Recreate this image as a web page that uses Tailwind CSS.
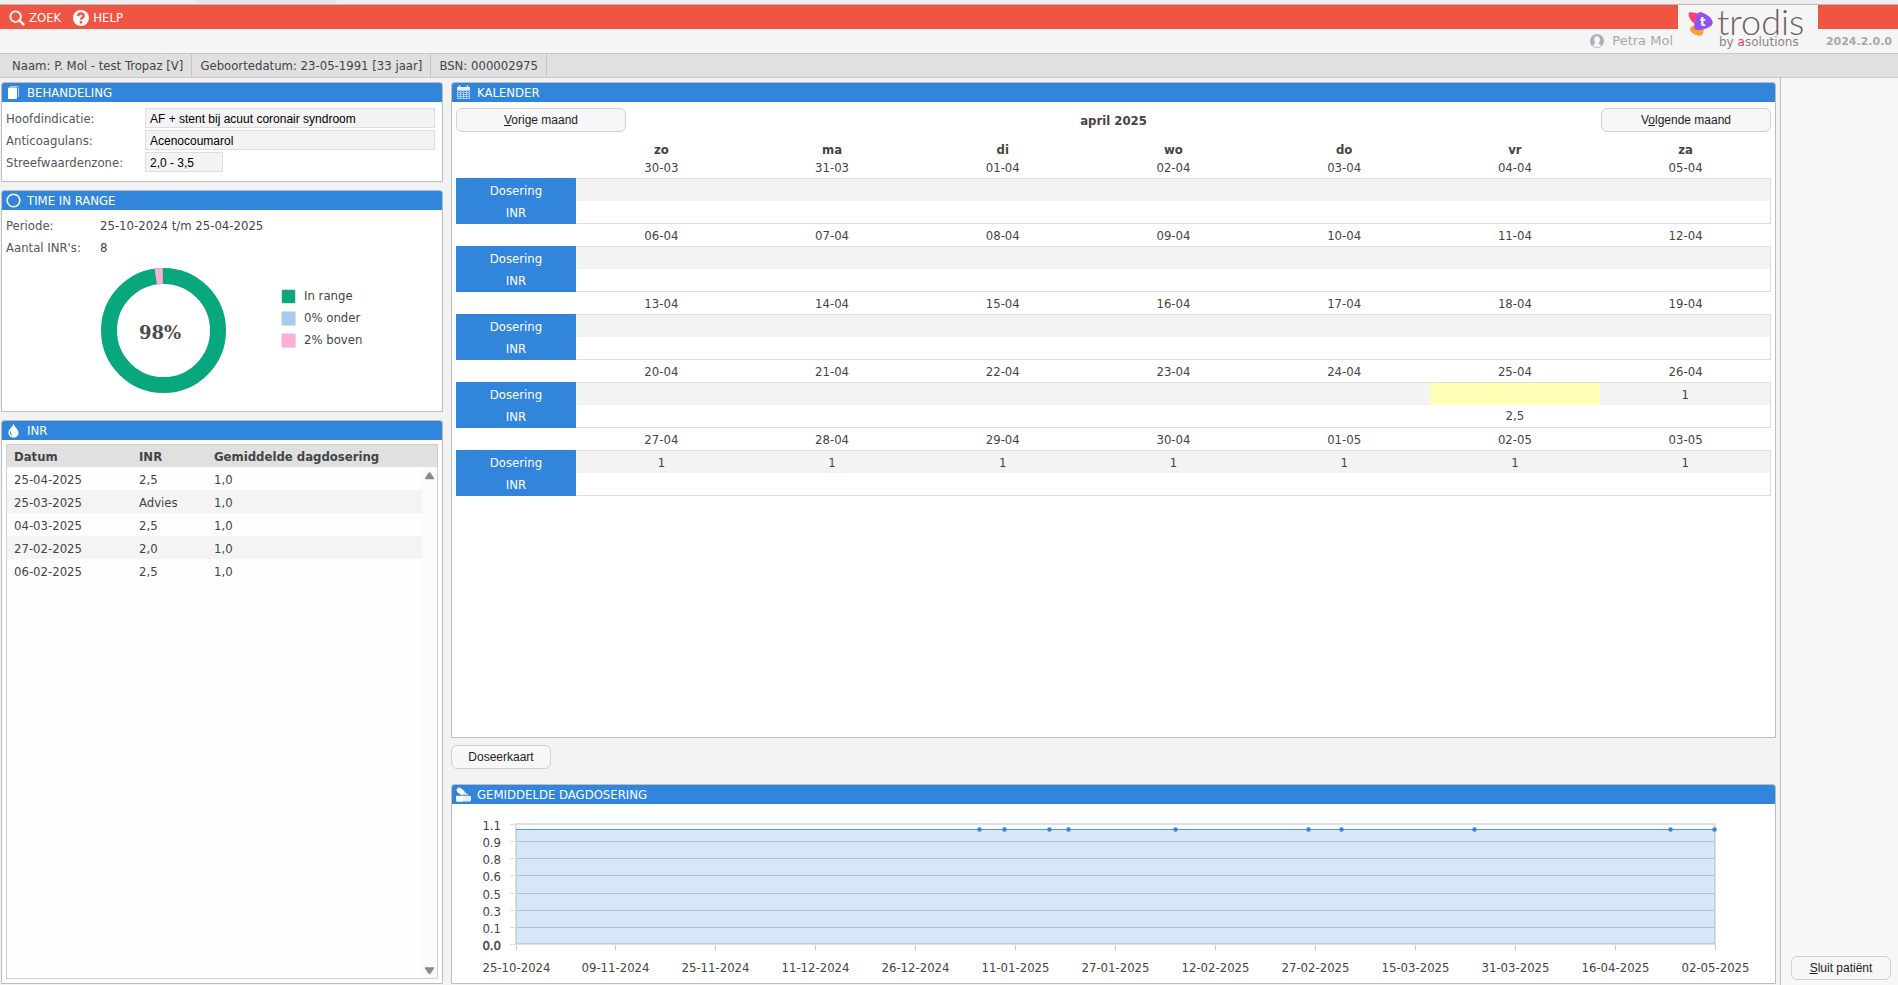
<!DOCTYPE html>
<html lang="nl">

<head>
  <meta charset="UTF-8" />
  <meta name="viewport" content="width=device-width, initial-scale=1.0" />
  <title>Trodis</title>
  <script src="https://cdn.jsdelivr.net/npm/@tailwindcss/browser@4"></script>
</head>

<body class="h-screen flex flex-col overflow-hidden bg-[#f3f3f3] text-[#444444] text-[13px] leading-[16px] font-['DejaVu_Sans_Condensed','DejaVu_Sans',sans-serif]">

  <!-- Window edge -->
  <div class="h-[5px] shrink-0 bg-[#eeeeee] border-b border-[#bbbbbb]">
    <div class="ml-[196px] w-[141px] h-1 bg-[#e6e6e6] rounded-b"></div>
  </div>

  <!-- Header -->
  <header class="flex shrink-0 h-12 bg-[#f5f5f5]">
    <div class="flex-1 flex flex-col">
      <nav class="h-6 bg-[#f05543] text-white flex items-center pl-[9px] pt-px gap-3">
        <a href="#" class="flex items-center gap-1">
          <svg class="w-4 h-4" viewBox="0 0 17 17" fill="none" stroke="white" stroke-linecap="round">
            <circle cx="7" cy="7" r="5.6" stroke-width="2" />
            <path d="M11.3 11.3l4 4" stroke-width="2.6" />
          </svg>
          ZOEK
        </a>
        <a href="#" class="flex items-center gap-1">
          <svg class="w-4 h-4" viewBox="0 0 16 16">
            <circle cx="8" cy="8" r="8" fill="white" />
            <path d="M5.200 6.300c0-3.800 5.500-3.600 5.500-.5 0 2-2.600 1.900-2.600 3.900" fill="none" stroke="#f05543" stroke-width="2.400" />
            <circle cx="8" cy="12.300" r="1.400" fill="#f05543" />
          </svg>
          HELP
        </a>
      </nav>
      <div class="flex-1 flex items-center justify-end gap-2 pr-[5px] pb-1 pt-1 pl-2 text-[#a8a8a8] font-['DejaVu_Sans',sans-serif]">
        <svg class="w-[14px] h-[14px]" viewBox="0 0 14 14">
          <circle cx="7" cy="7" r="7" fill="#a9b0bb" />
          <path d="M7 2.200C3.500 2.200 3.600 6.500 5 8.500c.3 1.200-.6 1.800-2.600 2.600 1.500 3 7.700 3 9.200 0C9.600 10.300 8.700 9.700 9 8.500c1.400-2 1.500-6.300-2-6.300z" fill="#f5f5f5" />
        </svg>
        Petra Mol
      </div>
    </div>
    <!-- Logo -->
    <div class="w-[140px] pl-[10px] pt-1 flex gap-1">
      <svg class="w-[25px] h-[25px] mt-0.5" viewBox="0 0 25 25">
        <path d="M.6 3.600C.2 1.800 1.300 1 3 1.200L14 3l-6 11C4 11.500 1.200 8 .6 3.600z" fill="#ff3f77" />
        <path d="M1.800 18.500c-.6-2 4.500-5.500 8-5.500l6 5c-.3 3.500-1.200 6.500-3 6.800C8.500 25 3 22.500 1.800 18.500z" fill="#ff9f38" />
        <path d="M11.500 1C13 .2 22 4.500 24 9c1.200 2.600 1 4.600-1.500 6.200C19 17.600 12 19.500 8.500 19c-2.800-.4-2.400-3-1.600-6.500C7.900 8.500 9.500 2.200 11.500 1z" fill="#9150f5" />
        <text x="12" y="15" font-family="DejaVu Sans" font-weight="bold" font-size="12" fill="white">t</text>
      </svg>
      <div class="flex flex-col gap-1 text-[#6b6165]">
        <span class="text-[36px] leading-[24px] font-light font-['Lato',sans-serif]">trodis</span>
        <span class="pl-0.5 text-[12px] leading-[10px] text-[#8b8487] font-['DejaVu_Sans',sans-serif]">by <span class="text-[#e83a4c]">a</span>solutions</span>
      </div>
    </div>
    <div class="w-20 flex flex-col">
      <div class="h-6 bg-[#f05543]"></div>
      <div class="flex-1 flex items-center justify-end pt-px pr-1.5 text-[11px] font-bold text-[#a8a8a8] font-['DejaVu_Sans',sans-serif]">2024.2.0.0</div>
    </div>
  </header>

  <!-- Patient bar -->
  <div class="shrink-0 h-[25px] bg-[#e0e0e0] border-y border-[#c8c8c8] flex pl-1">
    <div class="px-2 pt-1 border-r border-[#c4c4cc]">Naam: P. Mol - test Tropaz [V]</div>
    <div class="px-2 pt-1 border-r border-[#c4c4cc]">Geboortedatum: 23-05-1991 [33 jaar]</div>
    <div class="px-2 pt-1 border-r border-[#c4c4cc]">BSN: 000002975</div>
  </div>

  <main class="flex-1 min-h-0 flex">
    <!-- Left column -->
    <div class="w-[443px] shrink-0 flex flex-col gap-2 pl-px pt-1 pb-px">
      <section class="h-[100px] shrink-0 bg-white border border-[#bdbdbd] rounded-t-[3px]">
        <h2 class="h-[19px] bg-[#3186dc] text-white rounded-t-[2px] flex items-center gap-1.5 pl-1">
          <svg class="w-[15px] h-[15px]" viewBox="0 0 15 15">
            <path d="M4 1.500h7.500a1 1 0 0 1 1 1V12" fill="none" stroke="#a9cdf2" />
            <rect x="2" y="2.500" width="9" height="11.500" rx="1" fill="white" />
          </svg>
          BEHANDELING
        </h2>
        <div class="pl-1 pr-[7px] pt-[6px] grid grid-cols-[139px_1fr] gap-y-0.5 items-center">
          <label for="indicatie" class="pt-0.5 text-[#555555]">Hoofdindicatie:</label>
          <input id="indicatie" readonly value="AF + stent bij acuut coronair syndroom" class="h-5 w-full px-1 pt-0.5 bg-[#f3f3f3] border border-[#dddddd] text-black text-[12px] font-['Liberation_Sans',sans-serif]" />
          <label for="anticoagulans" class="pt-0.5 text-[#555555]">Anticoagulans:</label>
          <input id="anticoagulans" readonly value="Acenocoumarol" class="h-5 w-full px-1 pt-0.5 bg-[#f3f3f3] border border-[#dddddd] text-black text-[12px] font-['Liberation_Sans',sans-serif]" />
          <label for="streefwaarde" class="pt-0.5 text-[#555555]">Streefwaardenzone:</label>
          <input id="streefwaarde" readonly value="2,0 - 3,5" class="h-5 w-[78px] px-1 pt-0.5 bg-[#f3f3f3] border border-[#dddddd] text-black text-[12px] font-['Liberation_Sans',sans-serif]" />
        </div>
      </section>

      <section class="h-[222px] shrink-0 bg-white border border-[#bdbdbd] rounded-t-[3px]">
        <h2 class="h-[19px] bg-[#3186dc] text-white rounded-t-[2px] flex items-center gap-1.5 pl-1">
          <svg class="w-[15px] h-[15px]" viewBox="0 0 15 15">
            <circle cx="7.500" cy="7.500" r="6.300" fill="none" stroke="white" stroke-width="1.600" />
          </svg>
          TIME IN RANGE
        </h2>
        <dl class="pl-1 pt-[5px] grid grid-cols-[94px_1fr] leading-[22px]">
          <dt class="text-[#555555]">Periode:</dt>
          <dd>25-10-2024 t/m 25-04-2025</dd>
          <dt class="text-[#555555]">Aantal INR's:</dt>
          <dd>8</dd>
        </dl>
        <div class="flex pl-[99px] pt-[9px] gap-[55px]">
          <svg class="w-[125px] h-[125px]" viewBox="0 0 125 125">
            <circle cx="62.500" cy="62.500" r="54.500" fill="none" stroke="#08a77e" stroke-width="16" />
            <circle cx="62.500" cy="62.500" r="54.500" fill="none" stroke="#ffaed4" stroke-width="16" pathLength="100" stroke-dasharray="2.100 97.900" transform="rotate(-98.200 62.500 62.500)" />
            <text x="59" y="71" text-anchor="middle" font-family="DejaVu Serif" font-weight="bold" font-size="18" fill="#4c4c4c">98%</text>
          </svg>
          <ul class="pt-[17px] leading-[22px]">
            <li class="flex items-center gap-2"><span class="w-[15px] h-[15px] bg-[#08a77e] border border-[#dddddd] rounded-[2px]"></span>In range</li>
            <li class="flex items-center gap-2"><span class="w-[15px] h-[15px] bg-[#a8cbf0] border border-[#dddddd] rounded-[2px]"></span>0% onder</li>
            <li class="flex items-center gap-2"><span class="w-[15px] h-[15px] bg-[#ffaed4] border border-[#dddddd] rounded-[2px]"></span>2% boven</li>
          </ul>
        </div>
      </section>

      <section class="flex-1 min-h-0 flex flex-col bg-white border border-[#bdbdbd] rounded-t-[3px]">
        <h2 class="h-[19px] shrink-0 bg-[#3186dc] text-white rounded-t-[2px] flex items-center gap-1.5 pl-1">
          <svg class="w-[15px] h-[15px]" viewBox="0 0 15 15">
            <path d="M7.500.6C8.200 4 12.600 6.500 12.600 9.800a5.100 4.900 0 0 1-10.200 0C2.400 6.500 6.800 4 7.500.6z" fill="white" />
            <path d="M4.600 8.500c-.5 2 .3 3.300 1.700 4" fill="none" stroke="#3186dc" />
          </svg>
          INR
        </h2>
        <div class="flex-1 m-1 border border-[#cfcfcf] bg-[#fefefe] flex flex-col">
          <div class="flex-1 flex bg-[linear-gradient(#e0e0e0_22px,transparent_22px)]">
            <div class="flex-1">
              <table class="w-full table-fixed">
                <colgroup>
                  <col class="w-[125px]" />
                  <col class="w-[75px]" />
                  <col />
                </colgroup>
                <thead>
                  <tr class="h-[22px] text-left">
                    <th class="pl-[7px] pt-0.5">Datum</th>
                    <th class="pl-[7px] pt-0.5">INR</th>
                    <th class="pl-[7px] pt-0.5">Gemiddelde dagdosering</th>
                  </tr>
                </thead>
                <tbody>
                  <tr class="h-[23px]"><td class="pl-[7px] pt-0.5">25-04-2025</td><td class="pl-[7px] pt-0.5">2,5</td><td class="pl-[7px] pt-0.5">1,0</td></tr>
                  <tr class="h-[23px] bg-[#f4f4f4]"><td class="pl-[7px] pt-0.5">25-03-2025</td><td class="pl-[7px] pt-0.5">Advies</td><td class="pl-[7px] pt-0.5">1,0</td></tr>
                  <tr class="h-[23px]"><td class="pl-[7px] pt-0.5">04-03-2025</td><td class="pl-[7px] pt-0.5">2,5</td><td class="pl-[7px] pt-0.5">1,0</td></tr>
                  <tr class="h-[23px] bg-[#f4f4f4]"><td class="pl-[7px] pt-0.5">27-02-2025</td><td class="pl-[7px] pt-0.5">2,0</td><td class="pl-[7px] pt-0.5">1,0</td></tr>
                  <tr class="h-[23px]"><td class="pl-[7px] pt-0.5">06-02-2025</td><td class="pl-[7px] pt-0.5">2,5</td><td class="pl-[7px] pt-0.5">1,0</td></tr>
                </tbody>
              </table>
            </div>
            <!-- Scrollbar -->
            <div class="w-[15px] mt-[22px] pt-1 pb-[3px] bg-[#fbfbfb] flex flex-col items-center justify-between">
              <svg class="w-[9px] h-[9px]" viewBox="0 0 9 9"><path d="M3.700 1.500h1.600L9 7v1.200H0V7z" fill="#8a8a8a" /></svg>
              <svg class="w-[9px] h-[9px]" viewBox="0 0 9 9"><path d="M3.700 8h1.600L9 2.500V1.200H0v1.300z" fill="#8a8a8a" /></svg>
            </div>
          </div>
        </div>
      </section>
    </div>

    <!-- Middle column -->
    <div class="flex-1 min-w-0 flex flex-col pl-2 pr-1 pt-1 pb-px">
      <section class="flex-1 min-h-0 bg-white border border-[#bdbdbd] rounded-t-[3px]">
        <h2 class="h-[19px] bg-[#3186dc] text-white rounded-t-[2px] flex items-center gap-1.5 pl-1">
          <svg class="w-[15px] h-[15px]" viewBox="0 0 15 15">
            <path d="M1 2h13v3H1z" fill="#e8f2fc" />
            <path d="M3.500.5v3M11.500.5v3" stroke="white" stroke-width="1.500" />
            <path d="M1.500 5.500h12v8h-12zM1.500 7.500h12M1.500 9.500h12M1.500 11.500h12M4.500 5.500v8M7.500 5.500v8M10.500 5.500v8" fill="none" stroke="#a9cdf2" />
          </svg>
          KALENDER
        </h2>
        <div class="flex items-center justify-between px-1 pt-[6px]">
          <button type="button" class="w-[170px] h-6 rounded-md border border-[#d0d0d0] bg-[#f7f7f7] text-[#222222] text-[12px] font-['Liberation_Sans',sans-serif]"><u>V</u>orige maand</button>
          <span class="pt-0.5 font-bold">april 2025</span>
          <button type="button" class="w-[170px] h-6 rounded-md border border-[#d0d0d0] bg-[#f7f7f7] text-[#222222] text-[12px] font-['Liberation_Sans',sans-serif]">V<u>o</u>lgende maand</button>
        </div>
        <div class="px-1 pt-2">
          <table class="w-full table-fixed border-separate border-spacing-0 text-center">
            <thead>
              <tr class="h-4 leading-[12px]">
                <td class="w-[120px]"></td>
                <th class="pt-1">zo</th>
                <th class="pt-1">ma</th>
                <th class="pt-1">di</th>
                <th class="pt-1">wo</th>
                <th class="pt-1">do</th>
                <th class="pt-1">vr</th>
                <th class="pt-1">za</th>
              </tr>
            </thead>
            <tbody id="calendar"></tbody>
          </table>
        </div>
      </section>

      <div class="shrink-0 pt-[7px] pb-[15px]">
        <button type="button" class="block w-[100px] h-6 rounded-md border border-[#d0d0d0] bg-[#f7f7f7] text-[#222222] text-[12px] font-['Liberation_Sans',sans-serif]">Doseerkaart</button>
      </div>

      <section class="shrink-0 bg-white border border-[#bdbdbd] rounded-t-[3px]">
        <h2 class="h-[19px] bg-[#3186dc] text-white rounded-t-[2px] flex items-center gap-1.5 pl-1">
          <svg class="w-[15px] h-[15px]" viewBox="0 0 15 15">
            <path d="M3.600 3.600l7 5.500" stroke="#c5ddf6" stroke-width="4.500" stroke-linecap="round" />
            <path d="M3.200 3.200l2.500 2" stroke="white" stroke-width="5" stroke-linecap="round" />
            <rect x="0" y="8.500" width="15" height="6" rx="1.500" fill="#e3effb" />
            <path d="M1.500 8.500H7v6H1.500A1.500 1.500 0 0 1 0 13v-3a1.500 1.500 0 0 1 1.500-1.500z" fill="white" />
            <path d="M0 8.400h15" stroke="#3186dc" stroke-width=".8" />
          </svg>
          GEMIDDELDE DAGDOSERING
        </h2>
        <svg id="chart" class="block w-full" viewBox="0 0 1323 179" font-size="13" fill="#444444"></svg>
      </section>
    </div>

    <!-- Right sidebar -->
    <aside class="w-[118px] shrink-0 flex flex-col justify-end border-l border-[#bdbdbd] bg-[#f7f7f7] pl-[10px] pb-[5px]">
      <button type="button" class="w-[100px] h-6 rounded-md border border-[#d0d0d0] bg-[#f7f7f7] text-[#222222] text-[12px] font-['Liberation_Sans',sans-serif]"><u>S</u>luit patiënt</button>
    </aside>
  </main>

  <script>
    const weeks = [
      { dates: ["30-03", "31-03", "01-04", "02-04", "03-04", "04-04", "05-04"] },
      { dates: ["06-04", "07-04", "08-04", "09-04", "10-04", "11-04", "12-04"] },
      { dates: ["13-04", "14-04", "15-04", "16-04", "17-04", "18-04", "19-04"] },
      {
        dates: ["20-04", "21-04", "22-04", "23-04", "24-04", "25-04", "26-04"],
        dose: ["", "", "", "", "", "", "1"],
        inr: ["", "", "", "", "", "2,5", ""],
      },
      {
        dates: ["27-04", "28-04", "29-04", "30-04", "01-05", "02-05", "03-05"],
        dose: ["1", "1", "1", "1", "1", "1", "1"],
      },
    ];
    const empty = ["", "", "", "", "", "", ""];
    const today = "25-04";

    document.getElementById("calendar").innerHTML = weeks.map(week => {
      const dates = week.dates.map(d => `<td class="pt-0.5">${d}</td>`).join("");
      const dose = (week.dose || empty).map((v, i) => {
        const bg = week.dates[i] === today ? "bg-[#ffffb5]" : "bg-[#f3f3f3]";
        return `<td class="pt-0.5 border-t border-[#dddddd] last:border-r ${bg}">${v}</td>`;
      }).join("");
      const inr = (week.inr || empty).map(v => `<td class="border-b border-[#dddddd] last:border-r">${v}</td>`).join("");
      return `
        <tr class="h-[22px]"><td></td>${dates}</tr>
        <tr class="h-[23px]"><th class="pt-0.5 bg-[#3186dc] text-white font-normal">Dosering</th>${dose}</tr>
        <tr class="h-[23px]"><th class="bg-[#3186dc] text-white font-normal">INR</th>${inr}</tr>`;
    }).join("");

    // Average daily dose chart
    const yTicks = [["1.1", 20.5], ["0.9", 37.5], ["0.8", 54.5], ["0.6", 71.5], ["0.5", 89.5], ["0.3", 106.5], ["0.1", 123.5], ["0.0", 140.5]];
    const xTicks = ["25-10-2024", "09-11-2024", "25-11-2024", "11-12-2024", "26-12-2024", "11-01-2025", "27-01-2025", "12-02-2025", "27-02-2025", "15-03-2025", "31-03-2025", "16-04-2025", "02-05-2025"];
    const points = [528, 553, 598, 617, 724, 857, 890, 1023, 1219, 1263];

    let chart = `<rect x="64" y="20" width="1199" height="120" fill="white" stroke="#e0e0e0" stroke-width="2" />`;
    yTicks.forEach(([label, y], i) => {
      chart += `<path d="M58 ${y}h6" stroke="#e0e0e0" />`;
      if (i > 0 && i < yTicks.length - 1) chart += `<path d="M65 ${y}h1197" stroke="#d0d0d0" />`;
      const bold = label === "0.0" ? `stroke="#444444" stroke-width="0.5"` : "";
      chart += `<text x="49" y="${y + 5}" text-anchor="end" ${bold}>${label}</text>`;
    });
    xTicks.forEach((label, i) => {
      const x = Math.floor(64 + i * 99.95) + 0.5;
      chart += `<path d="M${x} 141v5" stroke="#c8c8c8" /><text x="${x}" y="168" text-anchor="middle">${label}</text>`;
    });
    chart += `<rect x="64" y="25" width="1199" height="115" fill="#3186dc" fill-opacity="0.2" />`;
    chart += `<path d="M64 25.5h1199" stroke="#5599dd" />`;
    points.forEach(x => {
      chart += `<circle cx="${x - 0.5}" cy="25.5" r="2.2" fill="#3186dc" />`;
    });
    document.getElementById("chart").innerHTML = chart;
  </script>

</body>

</html>
